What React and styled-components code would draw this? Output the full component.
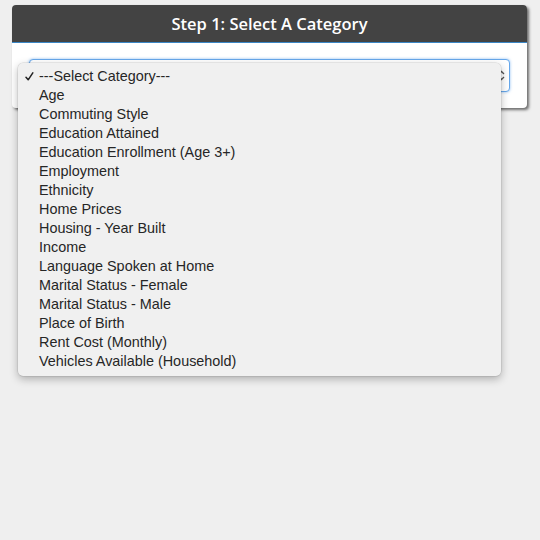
import React from "react";
import styled, { createGlobalStyle } from "styled-components";

const Global = createGlobalStyle`
  html, body { margin: 0; padding: 0; background: #efefef; }
  body { font-family: "Liberation Sans", Arial, sans-serif; }
`;

const Page = styled.div`
  width: 540px;
  height: 540px;
  padding: 5px 13px 0 12px;
  box-sizing: border-box;
`;

const Panel = styled.div`
  background: #fff;
  border-radius: 4px;
  box-shadow: 2px 2px 3px rgba(0, 0, 0, 0.55);
  display: flex;
  flex-direction: column;
`;

const Header = styled.div`
  height: 37px;
  background: #434343;
  border-radius: 4px 4px 0 0;
  border-bottom: 1px solid #3b87c6;
  display: flex;
  align-items: center;
  justify-content: center;
  color: #fff;
  font-family: "Open Sans", sans-serif;
  font-weight: 600;
  font-size: 16.5px;
`;

const Body = styled.div`
  padding: 16px 17px;
`;

const SelectBox = styled.div`
  position: relative;
  height: 31px;
  border: 1px solid #66a7ea;
  border-radius: 4px;
  box-shadow: 0 0 3px rgba(70, 150, 235, 0.6);
  background: #fff;
  display: flex;
  align-items: center;
  justify-content: flex-end;
  padding-right: 4px;
`;

const Arrows = styled.svg`
  display: block;
`;

const Menu = styled.ul`
  position: absolute;
  left: -12px;
  top: 3px;
  width: 483px;
  margin: 0;
  padding: 3px 0 6px;
  list-style: none;
  background: #f0f0f0;
  border-radius: 5px;
  box-shadow: 0 3px 9px rgba(0, 0, 0, 0.28), 0 0 0 0.5px rgba(0, 0, 0, 0.12);
  box-sizing: border-box;
  z-index: 2;
  display: flex;
  flex-direction: column;
`;

const Item = styled.li`
  height: 19px;
  display: grid;
  grid-template-columns: 14px 1fr;
  align-items: center;
  padding-left: 7px;
  font-family: "Liberation Sans", Arial, sans-serif;
  font-size: 14.4px;
  color: #262626;
  white-space: nowrap;
`;

const CheckMark = styled.svg`
  display: block;
  margin-top: 1px;
`;

const options = [
  "---Select Category---",
  "Age",
  "Commuting Style",
  "Education Attained",
  "Education Enrollment (Age 3+)",
  "Employment",
  "Ethnicity",
  "Home Prices",
  "Housing - Year Built",
  "Income",
  "Language Spoken at Home",
  "Marital Status - Female",
  "Marital Status - Male",
  "Place of Birth",
  "Rent Cost (Monthly)",
  "Vehicles Available (Household)",
];

export default function App() {
  return (
    <>
      <Global />
      <Page>
        <Panel>
          <Header>Step 1: Select A Category</Header>
          <Body>
            <SelectBox>
              <Arrows width="7" height="11" viewBox="0 0 7 11">
                <path d="M1 4 L3.5 1.5 L6 4" fill="none" stroke="#555" strokeWidth="1.3" />
                <path d="M1 7 L3.5 9.5 L6 7" fill="none" stroke="#555" strokeWidth="1.3" />
              </Arrows>
              <Menu>
                {options.map((o, i) => (
                  <Item key={o}>
                    <span>
                      {i === 0 && (
                        <CheckMark width="9" height="9" viewBox="0 0 9 9">
                          <path
                            d="M1 5.2 L3.2 7.8 L7.8 0.8"
                            fill="none"
                            stroke="#222"
                            strokeWidth="1.5"
                            strokeLinecap="round"
                            strokeLinejoin="round"
                          />
                        </CheckMark>
                      )}
                    </span>
                    <span>{o}</span>
                  </Item>
                ))}
              </Menu>
            </SelectBox>
          </Body>
        </Panel>
      </Page>
    </>
  );
}
